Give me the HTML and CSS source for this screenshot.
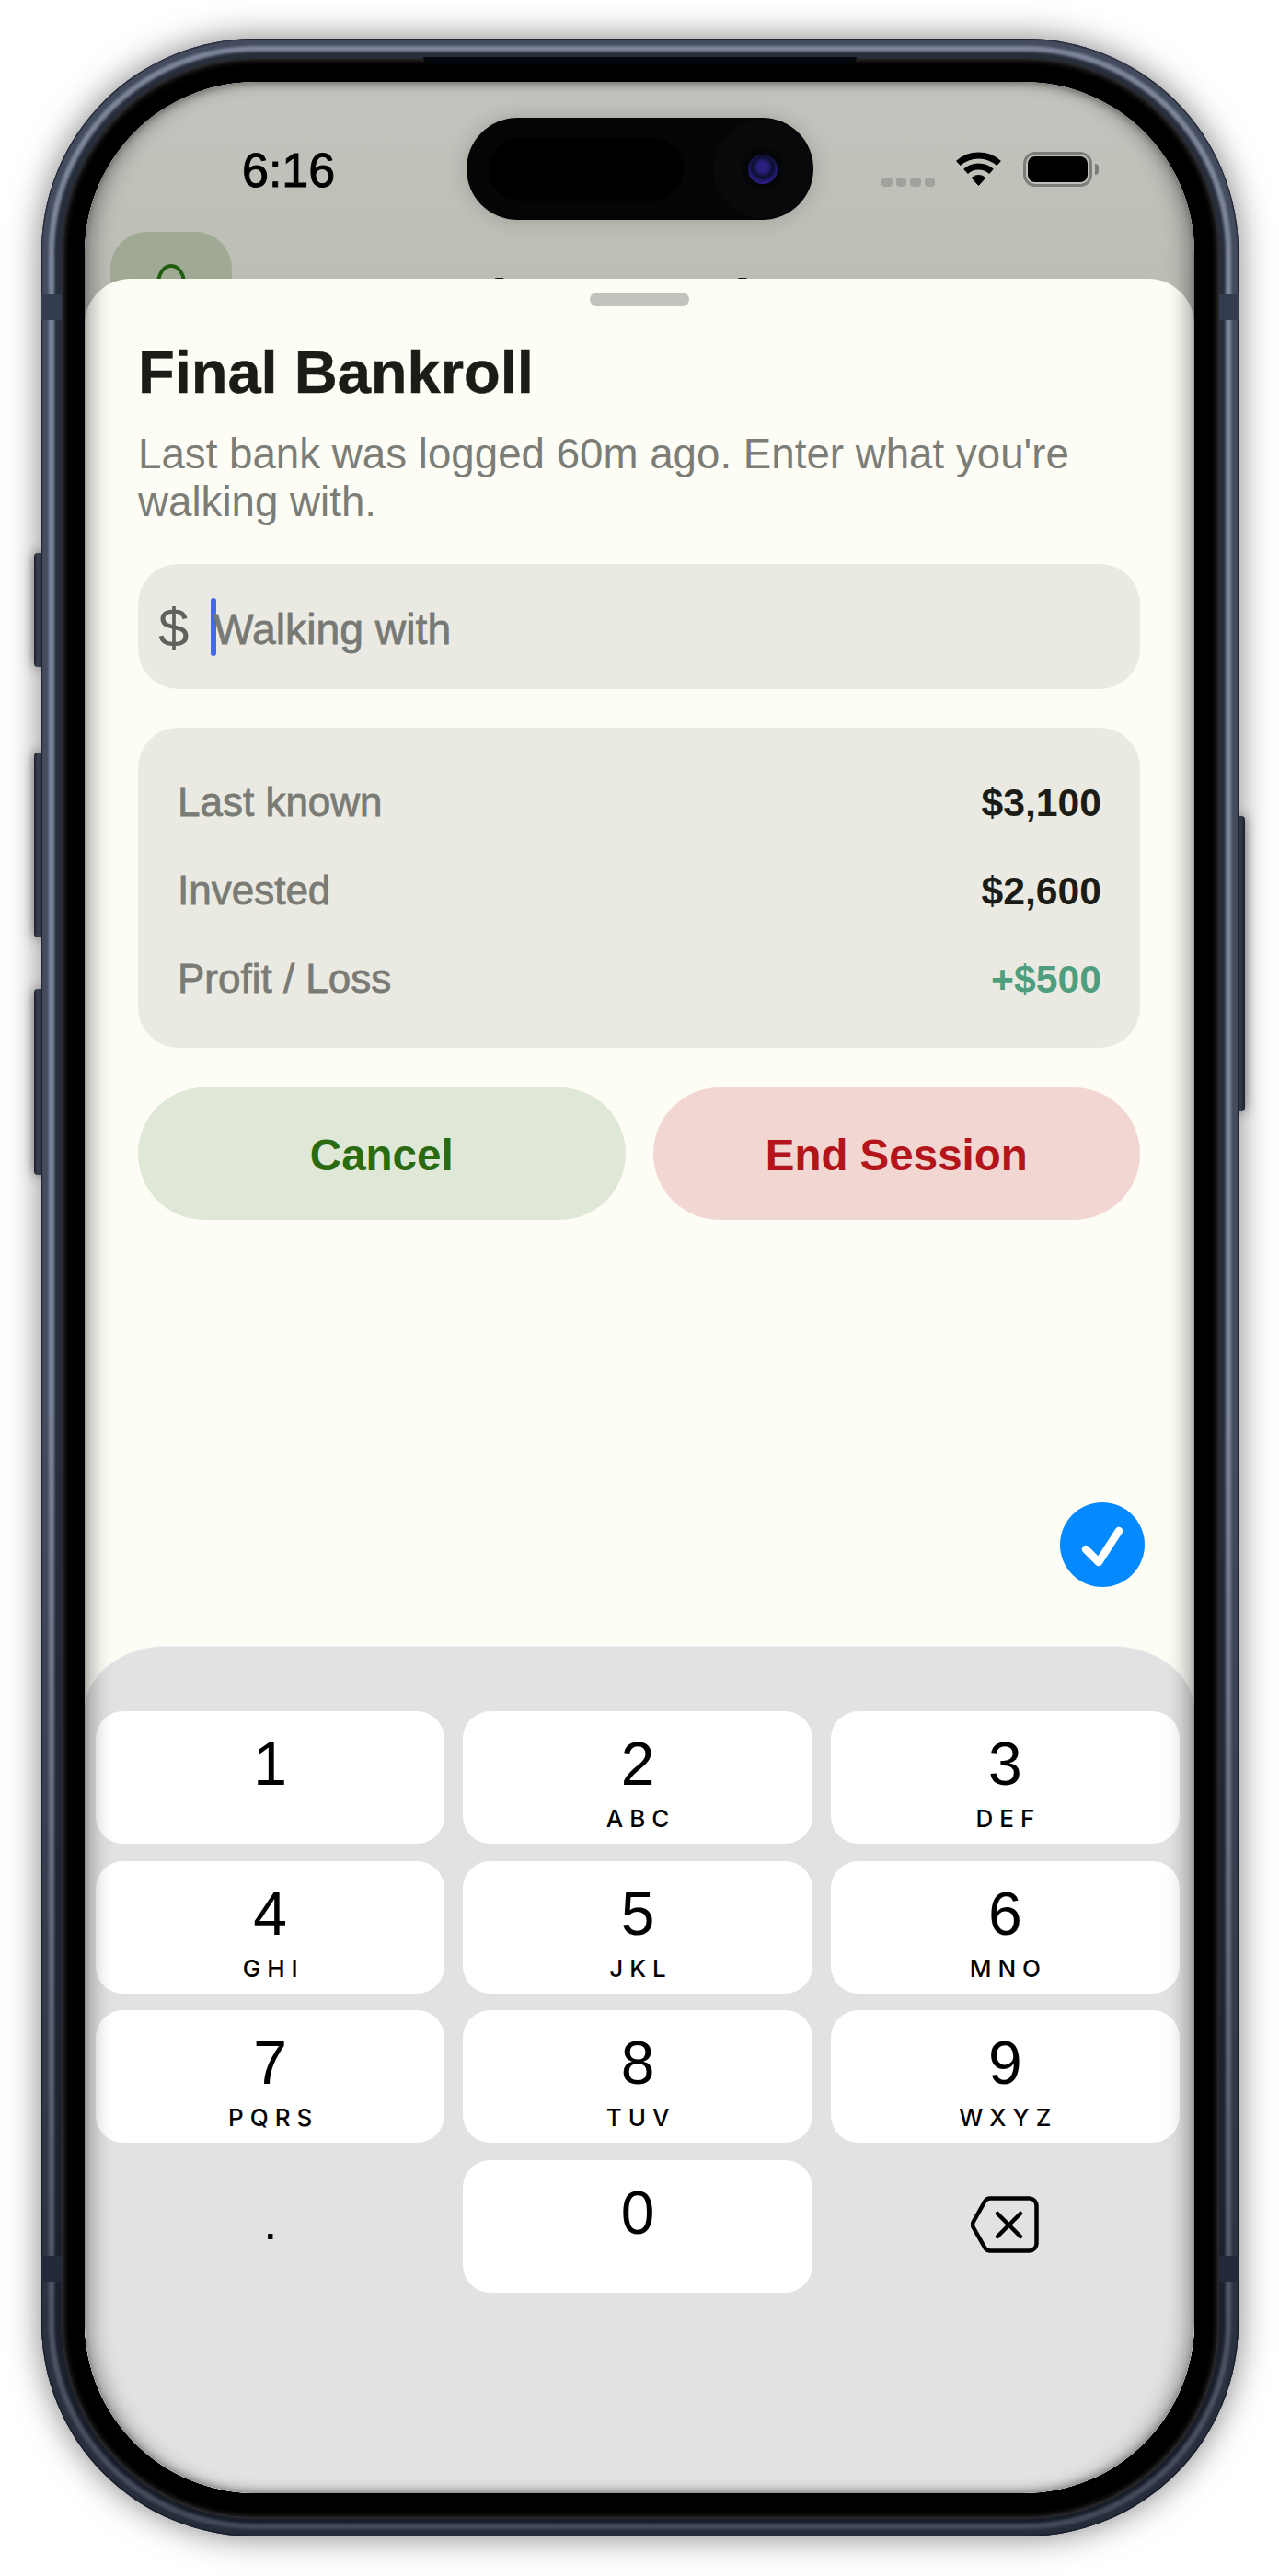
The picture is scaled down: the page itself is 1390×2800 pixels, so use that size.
FILE: index.html
```html
<!DOCTYPE html>
<html lang="en">
<head>
<meta charset="utf-8">
<title>Final Bankroll</title>
<link rel="stylesheet" href="styles.css">
</head>
<body>
<div class="phone">
  <span class="side side-l1"></span>
  <span class="side side-l2"></span>
  <span class="side side-l3"></span>
  <span class="side side-r"></span>
  <div class="frame">
    <span class="band band-tl"></span>
    <span class="band band-tr"></span>
    <span class="band band-bl"></span>
    <span class="band band-br"></span>
    <span class="speaker"></span>
    <div class="bezel">
      <div class="screen">
        <div class="behind">
          <div class="app-btn"><span class="app-ring"></span></div>
          <div class="app-title">Live Session</div>
        </div>
        <div class="status">
          <div class="time">6:16</div>
          <div class="island">
            <span class="island-pill"></span>
            <span class="cam"><span class="lens"></span></span>
          </div>
          <div class="status-right">
            <div class="signal"><i></i><i></i><i></i><i></i></div>
            <svg class="wifi" width="51" height="38" viewBox="0 0 51 38" aria-hidden="true">
              <path d="M3.4 12.5A33 33 0 0 1 47.6 12.5" fill="none" stroke="#000" stroke-width="7"/>
              <path d="M11.5 21.4A21 21 0 0 1 39.5 21.4" fill="none" stroke="#000" stroke-width="7"/>
              <path d="M25.5 36.5L18.1 28.3A11 11 0 0 1 32.9 28.3Z" fill="#000" stroke="#000" stroke-width="1" stroke-linejoin="round"/>
            </svg>
            <div class="battery"><span class="battery-fill"></span></div>
          </div>
        </div>
        <div class="sheet">
          <div class="sheet-body">
            <div class="handle"></div>
            <h1 class="title">Final Bankroll</h1>
            <p class="sub">Last bank was logged 60m ago. Enter what you're walking with.</p>
            <div class="input">
              <span class="dollar">$</span>
              <span class="caret"></span>
              <span class="placeholder">Walking with</span>
            </div>
            <div class="card">
              <div class="row"><span class="label">Last known</span><span class="value">$3,100</span></div>
              <div class="row"><span class="label">Invested</span><span class="value">$2,600</span></div>
              <div class="row"><span class="label">Profit / Loss</span><span class="value value-pos">+$500</span></div>
            </div>
            <div class="actions">
              <div class="btn btn-cancel">Cancel</div>
              <div class="btn btn-end">End Session</div>
            </div>
          </div>
          <div class="done-row">
            <div class="done">
              <svg width="92" height="92" viewBox="0 0 92 92" aria-hidden="true">
                <path d="M28 51L42 65L64 31" fill="none" stroke="#fff" stroke-width="8.5" stroke-linecap="round" stroke-linejoin="round"/>
              </svg>
            </div>
          </div>
          <div class="keyboard">
            <div class="key"><span class="num">1</span><span class="abc">&nbsp;</span></div>
            <div class="key"><span class="num">2</span><span class="abc">ABC</span></div>
            <div class="key"><span class="num">3</span><span class="abc">DEF</span></div>
            <div class="key"><span class="num">4</span><span class="abc">GHI</span></div>
            <div class="key"><span class="num">5</span><span class="abc">JKL</span></div>
            <div class="key"><span class="num">6</span><span class="abc">MNO</span></div>
            <div class="key"><span class="num">7</span><span class="abc">PQRS</span></div>
            <div class="key"><span class="num">8</span><span class="abc">TUV</span></div>
            <div class="key"><span class="num">9</span><span class="abc">WXYZ</span></div>
            <div class="key key-plain"><span class="num num-dot">.</span></div>
            <div class="key"><span class="num">0</span></div>
            <div class="key key-plain key-del">
              <svg width="74" height="62" viewBox="0 0 74 62" aria-hidden="true">
                <path d="M21 2.500H64A8 8 0 0 1 71.500 10.500V51.500A8 8 0 0 1 64 59.500H21A7 7 0 0 1 15.500 56.500L3 34.500A7 7 0 0 1 3 27.500L15.500 5.500A7 7 0 0 1 21 2.500Z" fill="none" stroke="#000" stroke-width="4.500" stroke-linejoin="round"/>
                <path d="M29 19L54 44M54 19L29 44" fill="none" stroke="#000" stroke-width="4.500" stroke-linecap="round"/>
              </svg>
            </div>
          </div>
        </div>
        <div class="vignette"></div>
      </div>
    </div>
  </div>
</div>
</body>
</html>
```

FILE: styles.css
```css
* { box-sizing: border-box; }
html, body { margin: 0; padding: 0; background: #fff; }
body { width: 1390px; height: 2800px; font-family: "Liberation Sans", Arial, sans-serif; overflow: hidden; }

.phone { position: relative; width: 1301px; height: 2715px; margin: 42px 0 0 45px; }

.side { position: absolute; width: 12px; background: linear-gradient(90deg, #222836, #4a5367 35%, #2c3345); border-radius: 4px; box-shadow: 0 0 14px rgba(0,0,0,.5); }
.side-l1 { left: -8px; top: 559px; height: 124px; }
.side-l2 { left: -8px; top: 776px; height: 201px; }
.side-l3 { left: -8px; top: 1033px; height: 202px; }
.side-r { right: -7px; top: 845px; height: 321px; background: linear-gradient(90deg, #2c3345, #424b5e 60%, #222836); }

.frame {
  position: relative;
  width: 100%; height: 100%;
  padding: 21px 21px 19px 22px;
  border-radius: 232px;
  background: #272d3b;
  box-shadow:
    0 0 36px rgba(0,0,0,.5),
    inset 0 0 1px 1px rgba(25,30,42,.9),
    inset 0 0 3px 8px #434b5d,
    inset 0 0 3px 14px #7f889c;
}
.frame::after {
  content: ""; position: absolute; left: 0; top: 0; right: 0; bottom: 0; z-index: 0;
  border-radius: inherit;
  background: linear-gradient(180deg, transparent 0, transparent 55%, rgba(8,12,22,.5) 100%);
}
.band { position: absolute; z-index: 0; width: 22px; height: 28px; background: #343c4f; }
.band-tl { left: 0; top: 278px; }
.band-tr { right: 0; top: 278px; }
.band-bl { left: 0; top: 2410px; }
.band-br { right: 0; top: 2410px; }
.speaker { position: absolute; z-index: 2; left: 415px; top: 20px; width: 471px; height: 8px; background: #04060b; border-radius: 0 0 8px 8px; }

.bezel {
  position: relative; z-index: 1;
  width: 100%; height: 100%;
  padding: 26px 27px 28px 25px;
  background: #000;
  border-radius: 210px;
  box-shadow: inset 0 0 7px 1px rgba(120,120,125,.65);
}

.screen {
  position: relative;
  width: 100%; height: 100%;
  display: flex; flex-direction: column;
  border-radius: 186px;
  overflow: hidden;
  background: #e1e3e2;
}

.behind {
  position: absolute; left: 0; right: 0; top: 0; height: 400px;
  background: linear-gradient(180deg, #c3c4bd 0%, #b6b8af 100%);
}
.app-btn { position: absolute; left: 28px; top: 163px; width: 132px; height: 132px; background: #a0a993; border-radius: 40px; }
.app-ring { position: absolute; left: 50px; top: 35px; width: 32px; height: 42px; border: 4px solid #1f5c0b; border-radius: 50%; }
.app-title { position: absolute; left: 0; right: 0; top: 203px; text-align: center; font-size: 66px; line-height: 70px; font-weight: 700; color: #15160f; }

.status { position: relative; display: flex; height: 214px; padding: 39px 0 0 171px; flex: none; }
.time { width: 244px; margin-top: 39px; font-size: 52px; line-height: 36px; color: #000; -webkit-text-stroke: 1px #000; }
.island {
  position: relative; flex: none; display: flex; align-items: center;
  width: 377px; height: 111px; border-radius: 56px;
  background: #050505;
  box-shadow: 0 0 22px rgba(0,0,0,.18);
  padding-left: 24px;
}
.island-pill { width: 212px; height: 68px; border-radius: 34px; background: #000; }
.cam { position: absolute; left: 268px; top: 2px; width: 107px; height: 107px; border-radius: 50%; background: radial-gradient(circle, #040608 0 30%, #08090b 31% 100%); display: flex; align-items: center; justify-content: center; }
.lens { width: 32px; height: 32px; border-radius: 50%; background: radial-gradient(circle at 50% 42%, #2a2080 0 22%, #0c1030 45%, #33209a 78%, #10141c 100%); }

.status-right { display: flex; align-items: flex-end; margin: 37px 0 0 74px; height: 38px; }
.signal { display: flex; gap: 4px; margin-right: 22px; }
.signal i { display: block; width: 11.500px; height: 10px; border-radius: 4px; background: #a1a29c; }
.wifi { display: block; margin-right: 23px; }
.battery { position: relative; width: 75px; height: 38px; padding: 2px; border: 3px solid #7d7e79; border-radius: 13px; }
.battery::after { content: ""; position: absolute; right: -10px; top: 10px; width: 4px; height: 12px; background: #7d7e79; border-radius: 0 6px 6px 0; }
.battery-fill { display: block; width: 100%; height: 100%; background: #000; border-radius: 8px; }

.sheet {
  position: relative; flex: 1; min-height: 0;
  display: flex; flex-direction: column;
  background: #fdfdf6;
  border-radius: 50px 50px 0 0;
}
.sheet-body { padding: 15px 59px 0 58px; }
.handle { width: 108px; height: 15px; margin: 0 auto; border-radius: 8px; background: #c3c3be; }
.title { margin: 40px 0 0; font-size: 65px; line-height: 64px; font-weight: 700; color: #1b1c16; -webkit-text-stroke: .5px #1b1c16; }
.sub { margin: 31px 0 0; font-size: 45.700px; line-height: 52px; color: #7c7d77; }

.input {
  display: flex; align-items: center;
  height: 136px; margin-top: 41px; padding-left: 22px;
  background: #eaeae3; border-radius: 44px;
}
.dollar { width: 33px; padding-top: 4px; font-size: 60px; line-height: 60px; color: #60615c; }
.caret { width: 6px; height: 63px; margin-left: 24px; border-radius: 3px; background: #4169e8; flex: none; }
.placeholder { margin-left: -3px; padding-top: 6px; font-size: 46.300px; line-height: 60px; color: #787974; -webkit-text-stroke: .8px #787974; }

.card { margin-top: 42px; padding: 33px 42px 27px 43px; background: #eaeae3; border-radius: 44px; }
.row { display: flex; justify-content: space-between; align-items: center; height: 96px; }
.label { font-size: 44px; color: #7a7b75; -webkit-text-stroke: .8px #7a7b75; }
.value { font-size: 42.700px; font-weight: 700; color: #1b1c16; }
.value-pos { color: #4f9e7e; }

.actions { display: flex; gap: 30px; margin-top: 43px; }
.btn { flex: 1; height: 144px; padding-top: 2px; display: flex; align-items: center; justify-content: center; border-radius: 72px; font-size: 47.500px; font-weight: 700; }
.btn-cancel { background: #dfe7d7; color: #2a6a10; }
.btn-end { background: #f2d6d2; color: #b3151a; }

.done-row { display: flex; justify-content: flex-end; margin-top: 307px; padding-right: 54px; }
.done { width: 92px; height: 92px; border-radius: 50%; background: #0589ff; }
.done svg { display: block; }

.keyboard {
  flex: 1;
  margin-top: 65px;
  display: grid;
  grid-template-columns: repeat(3, 1fr);
  grid-auto-rows: 144px;
  column-gap: 20px; row-gap: 18.600px;
  align-content: start;
  padding: 70px 16px 0 12px;
  background: #e1e3e2;
  border-radius: 90px 90px 0 0 / 70px 70px 0 0;
  box-shadow: 0 -1px 0 #eceded;
}
.key {
  display: flex; flex-direction: column; align-items: center;
  padding-top: 24px;
  background: #fff; border-radius: 30px;
  color: #000;
}
.key-plain { background: transparent; }
.num { font-size: 66px; line-height: 66px; }
.num-dot { padding-top: 15px; font-size: 56px; line-height: 56px; }
.abc { margin-top: 14px; font-family: Inter, "Liberation Sans", sans-serif; font-size: 26px; line-height: 26px; font-weight: 500; letter-spacing: 7px; text-indent: 7px; }
.key-del { padding-top: 39px; }
.key-del svg { display: block; }

.vignette {
  position: absolute; left: 0; top: 0; right: 0; bottom: 0;
  border-radius: inherit;
  pointer-events: none;
  box-shadow:
    inset 16px 0 22px -8px rgba(0,0,0,.34),
    inset -16px 0 22px -8px rgba(0,0,0,.34),
    inset 0 5px 9px -3px rgba(0,0,0,.3),
    inset 0 -5px 9px -3px rgba(0,0,0,.3);
}
```
